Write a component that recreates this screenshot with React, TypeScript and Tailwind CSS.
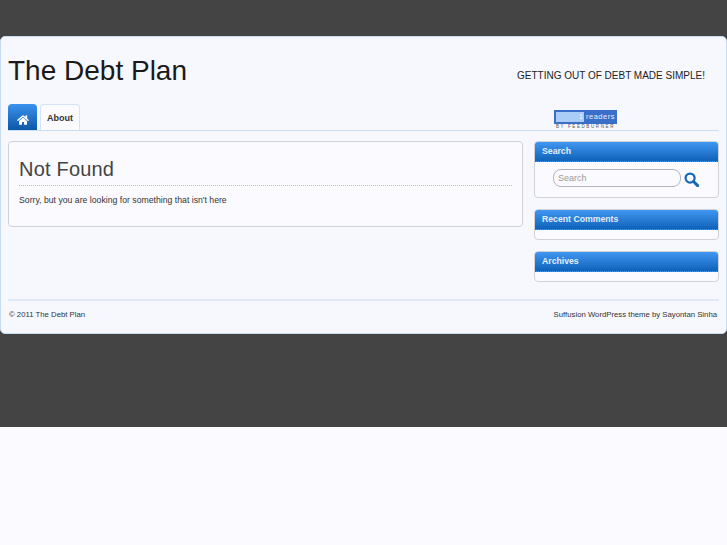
import { FaHome } from 'react-icons/fa';

function Widget({ title, children }: { title: string; children?: React.ReactNode }) {
  return (
    <section className="rounded-[4px] border border-[#d2d2d6] bg-[#fbfbff]">
      <h3 className="h-[20px] rounded-t-[3px] border-b border-dotted border-[#2a6fb8] bg-gradient-to-b from-[#3f97f2] to-[#0f62b8] pl-[7px] text-[8.7px] leading-[19px] font-bold text-[#e3eefa]">
        {title}
      </h3>
      <div className="min-h-[9px]">{children}</div>
    </section>
  );
}

export default function App() {
  return (
    <div className="min-h-[545px] bg-[#fbfbff] font-['Liberation_Sans',Arial,sans-serif] text-[#222]">
      <div className="h-[427px] bg-[#444444] pt-[36px]">
        <div className="h-[298px] rounded-[5px] border border-[#c5dcf3] bg-[#f6f8fe] px-[7px]">
          {/* Header */}
          <header className="flex h-[67px] justify-between">
            <h1 className="pt-[17px] text-[28px] leading-[34px] text-[#1a1a1a]">The Debt Plan</h1>
            <p className="pt-[32px] pr-[14px] text-[10px] leading-[13px] text-[#222]">GETTING OUT OF DEBT MADE SIMPLE!</p>
          </header>

          {/* Navigation */}
          <nav className="relative flex h-[27px] items-end gap-[3px] border-b border-[#c9def5]">
            <a className="flex h-[26px] w-[29px] items-center justify-center rounded-t-[4px] bg-gradient-to-b from-[#3a92ee] to-[#0b57a8] pt-[5px]">
              <FaHome size={12} color="#fff" />
            </a>
            <a className="h-[26px] w-[40px] rounded-t-[4px] border border-b-0 border-[#d4e3f5] bg-[#fbfbff] text-center text-[9px] leading-[26px] font-bold text-[#333]">
              About
            </a>
            <div className="absolute top-[6px] left-[546px] w-[63px]">
              <div className="flex h-[14px] items-center gap-[2px] bg-[#3a6fc9] pl-[2px]">
                <span className="h-[10px] w-[28px] bg-[#a9cdf7] pr-[1px] text-right text-[7px] leading-[10px] text-[#f4f8ff]">1</span>
                <span className="text-[7.5px] tracking-[0.5px] text-[#e6eefb]">readers</span>
              </div>
              <div className="text-center text-[4.5px] leading-[5px] tracking-[1.6px] text-[#555]">BY FEEDBURNER</div>
            </div>
          </nav>

          {/* Content */}
          <div className="mt-[10px] flex justify-between">
            <main className="h-[86px] w-[515px] rounded-[4px] border border-[#d2d2d6] bg-[#fbfbff] px-[10px]">
              <h2 className="mt-[15px] border-b border-dotted border-[#bbb] pb-[3px] text-[20px] leading-[25px] tracking-[0.2px] text-[#444]">Not Found</h2>
              <p className="mt-[8px] text-[8.7px] leading-[12px] text-[#333]">Sorry, but you are looking for something that isn't here</p>
            </main>
            <aside className="flex w-[185px] flex-col gap-[11px]">
              <Widget title="Search">
                <div className="flex h-[35px] items-start pt-[7px] pl-[18px]">
                  <input
                    placeholder="Search"
                    className="h-[18px] w-[128px] rounded-[8px] border border-[#b5b5b5] bg-[#fbfbff] pl-[4px] text-[9px] outline-none placeholder:text-[#999]"
                  />
                  <svg viewBox="0 0 16 16" className="mt-[3px] ml-[3px] h-[15px] w-[15px] text-[#1667b8]" fill="none" stroke="currentColor">
                    <circle cx="6.5" cy="6.5" r="4.8" strokeWidth="2.4" />
                    <path d="M10.2 10.2 14.5 14.5" strokeWidth="3.2" strokeLinecap="round" />
                  </svg>
                </div>
              </Widget>
              <Widget title="Recent Comments" />
              <Widget title="Archives" />
            </aside>
          </div>

          {/* Footer */}
          <footer className="mt-[17px] flex justify-between border-t-2 border-[#dfe8f7] pt-[8px] pr-[2px] pl-[1px] text-[7.75px] leading-[12px] text-[#333]">
            <span>© 2011 The Debt Plan</span>
            <span>Suffusion WordPress theme by Sayontan Sinha</span>
          </footer>
        </div>
      </div>
    </div>
  );
}
